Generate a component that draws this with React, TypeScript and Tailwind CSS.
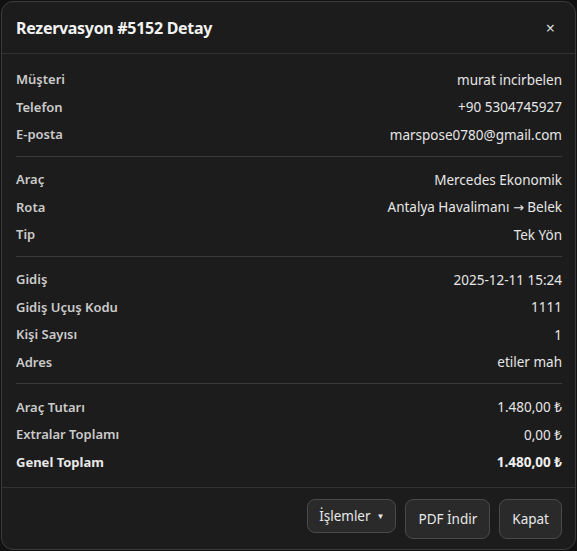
const font = { fontFamily: '"Noto Sans", "Open Sans", sans-serif' }

type Row = { label: string; value: React.ReactNode; strong?: boolean }

const sections: Row[][] = [
	[
		{ label: 'Müşteri', value: 'murat incirbelen' },
		{ label: 'Telefon', value: '+90 5304745927' },
		{ label: 'E-posta', value: 'marspose0780@gmail.com' },
	],
	[
		{ label: 'Araç', value: 'Mercedes Ekonomik' },
		{
			label: 'Rota',
			value: (
				<>
					Antalya Havalimanı <span className="font-['DejaVu_Sans'] text-[13px]">→</span> Belek
				</>
			),
		},
		{ label: 'Tip', value: 'Tek Yön' },
	],
	[
		{ label: 'Gidiş', value: '2025-12-11 15:24' },
		{ label: 'Gidiş Uçuş Kodu', value: '1111' },
		{ label: 'Kişi Sayısı', value: '1' },
		{ label: 'Adres', value: 'etiler mah' },
	],
	[
		{ label: 'Araç Tutarı', value: '1.480,00 ₺' },
		{ label: 'Extralar Toplamı', value: '0,00 ₺' },
		{ label: 'Genel Toplam', value: '1.480,00 ₺', strong: true },
	],
]

const App = () => {
	return (
		<div className="w-[577px] h-[551px] bg-[#111111] p-[1px]" style={font}>
			<div className="w-[575px] h-[549px] bg-[#1c1c1c] border border-[#3b3b3b] rounded-[12px] flex flex-col">
				{/* Header */}
				<div className="h-[52px] flex items-center justify-between pl-[14px] pr-[20px] border-b border-[#333333]">
					<h2 className="text-[16px] font-bold text-[#f2f2f2] tracking-[-0.3px]">Rezervasyon #5152 Detay</h2>
					<button className="text-[#d8d8d8] text-[16px] leading-none">×</button>
				</div>

				{/* Body */}
				<div className="flex-1 pl-[14px] pr-[13px] pt-[12px]">
					{sections.map((rows, si) => (
						<div key={si}>
							{si > 0 && <div className="h-px bg-[#3a3a3a] mt-[7px] mb-[9.5px]" />}
							{rows.map((r) => (
								<div key={r.label} className="flex justify-between items-center h-[27.5px]">
									<span className={`text-[13px] ${r.strong ? 'font-bold text-[#e8e8e8]' : 'font-semibold text-[#cbcbcb]'}`}>{r.label}</span>
									<span className={`text-[13.5px] ${r.strong ? 'text-[#f0f0f0] font-bold' : 'text-[#e6e6e6]'}`}>{r.value}</span>
								</div>
							))}
						</div>
					))}
				</div>

				{/* Footer */}
				<div className="border-t border-[#333333] flex justify-end items-start gap-[9px] pt-[11px] pb-[10px] pr-[13px]">
					<button className="h-[34px] px-[11px] rounded-[8px] bg-[#2a2a2a] border border-[#4a4a4a] text-[13.5px] text-[#e8e8e8] flex items-center gap-[6px]">
						İşlemler <span className="text-[8px]">▼</span>
					</button>
					<button className="h-[40px] px-[12px] rounded-[8px] bg-[#2a2a2a] border border-[#4a4a4a] text-[13.5px] text-[#e8e8e8]">
						PDF İndir
					</button>
					<button className="h-[40px] px-[12px] rounded-[8px] bg-[#2a2a2a] border border-[#4a4a4a] text-[13.5px] text-[#e8e8e8]">
						Kapat
					</button>
				</div>
			</div>
		</div>
	)
}

export default App
